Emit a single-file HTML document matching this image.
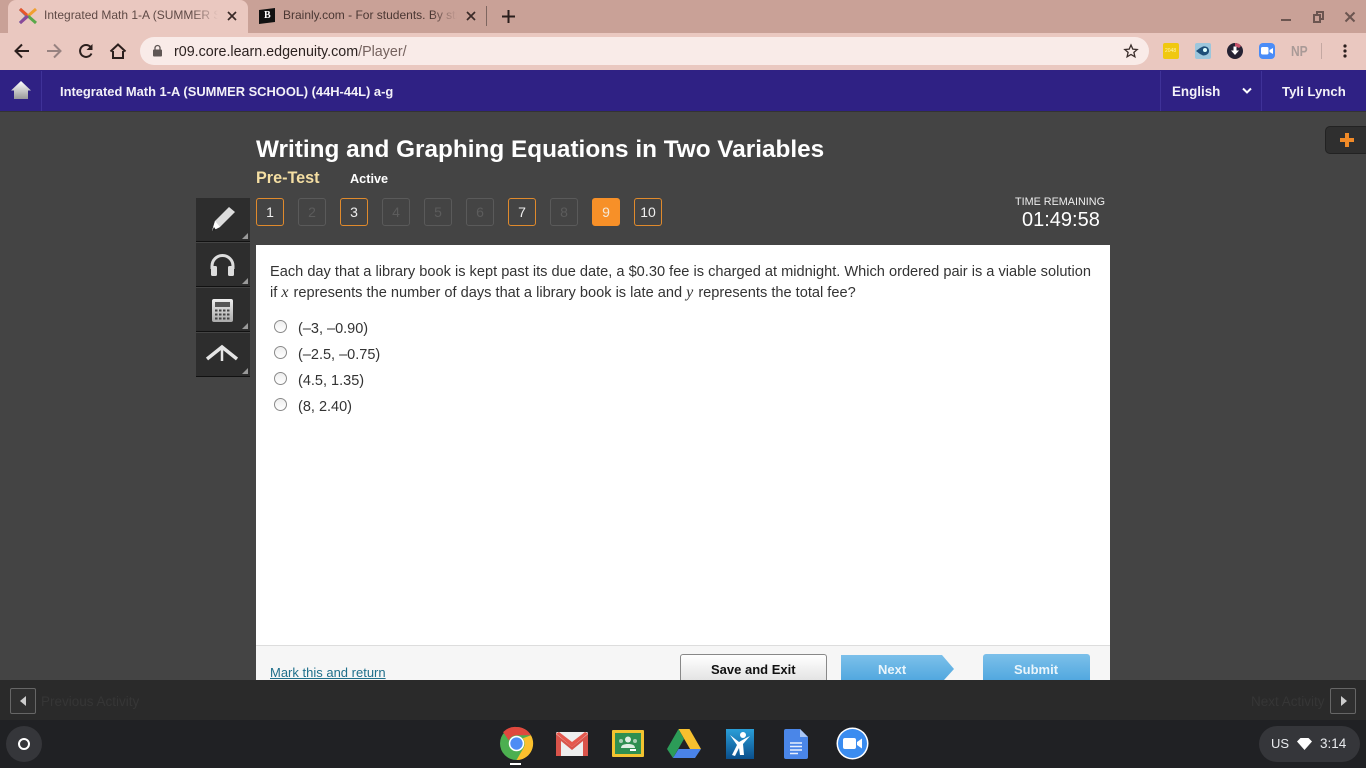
<!DOCTYPE html>
<html><head><meta charset="utf-8"><style>
html,body{margin:0;padding:0;width:1366px;height:768px;overflow:hidden;background:#444;font-family:"Liberation Sans",sans-serif}
.a{position:absolute}
.t{position:absolute;white-space:nowrap}
svg{position:absolute;overflow:visible}
.n{position:absolute;top:198px;width:26px;height:26px;border:1px solid #e08a2c;border-radius:3px;color:#eee;font-size:14px;line-height:27px;text-align:center}
.n.d{border-color:#5a5a5a;color:#5c5c5c}
.n.c{background:#f79028;border-color:#f79028;color:#f5e9d8}
.tool{position:absolute;left:196px;width:54px;height:43px;background:#2d2d2d;border-bottom:1px solid #111}
.tool i{position:absolute;right:2px;bottom:2px;width:0;height:0;border-style:solid;border-width:0 0 6px 6px;border-color:transparent transparent #999 transparent}
.r{position:absolute;left:274px;width:11px;height:11px;border:1px solid #8a8a8a;border-radius:50%;background:linear-gradient(#eee,#fff)}
.o{position:absolute;left:298px;font-size:14.5px;color:#333;white-space:nowrap}
.m{font:italic 16px 'Liberation Serif',serif;margin-right:1px}
</style></head><body>
<!-- tab strip -->
<div class="a" style="left:0;top:0;width:1366px;height:33px;background:#c9a197"></div>
<div class="a" style="left:8px;top:0;width:240px;height:33px;background:#eac8c0;border-radius:8px 8px 0 0"></div>
<svg style="left:18px;top:7px" width="20" height="18" viewBox="0 0 20 18"><path d="M2 2L9 9L2 16" stroke="#3f7fb5" stroke-width="3" fill="none"/><path d="M2 2L10 9" stroke="#e8562a" stroke-width="3"/><path d="M18 2L10 9" stroke="#f0a030" stroke-width="3"/><path d="M10 9L18 16" stroke="#5aa84a" stroke-width="3"/><path d="M2 16L10 9" stroke="#8a4a9a" stroke-width="3"/></svg>
<div class="t" style="left:44px;top:8px;font-size:12px;color:#5f4a46;width:174px;overflow:hidden;-webkit-mask-image:linear-gradient(90deg,#000 85%,transparent)">Integrated Math 1-A (SUMMER SCHOOL)</div>
<svg style="left:227px;top:11px" width="10" height="10"><path d="M1 1L9 9M9 1L1 9" stroke="#3a2a28" stroke-width="1.7"/></svg>
<svg style="left:259px;top:8px" width="16" height="16"><path d="M0 2L16 0V14L0 16Z" fill="#111"/></svg>
<div class="t" style="left:264px;top:10px;font:bold 10px 'Liberation Serif',serif;color:#fff">B</div>
<div class="t" style="left:283px;top:8px;font-size:12px;color:#4a3733;width:174px;overflow:hidden;-webkit-mask-image:linear-gradient(90deg,#000 85%,transparent)">Brainly.com - For students. By students.</div>
<svg style="left:466px;top:11px" width="10" height="10"><path d="M1 1L9 9M9 1L1 9" stroke="#3a2a28" stroke-width="1.7"/></svg>
<div class="a" style="left:486px;top:6px;width:1px;height:20px;background:#7e6660"></div>
<svg style="left:502px;top:10px" width="13" height="13"><path d="M6.500 0V13M0 6.500H13" stroke="#2a1e1c" stroke-width="2"/></svg>
<svg style="left:1280px;top:11px" width="76" height="12"><path d="M1 9H11" stroke="#6b5550" stroke-width="2"/><path d="M34 4H40V11H34Z M37 4V1H43V8H40" stroke="#6b5550" stroke-width="2" fill="none"/><path d="M65.500 1.500L74.500 10.500M74.500 1.500L65.500 10.500" stroke="#6b5550" stroke-width="2"/></svg>
<!-- toolbar -->
<div class="a" style="left:0;top:33px;width:1366px;height:37px;background:#eac8c0"></div>
<svg style="left:14px;top:43px" width="16" height="16" viewBox="0 0 16 16"><path d="M15 8H2M8 1.500L1.500 8L8 14.500" stroke="#2b1f1d" stroke-width="2" fill="none"/></svg>
<svg style="left:46px;top:43px" width="16" height="16" viewBox="0 0 16 16"><path d="M1 8H14M8 1.500L14.500 8L8 14.500" stroke="#978280" stroke-width="2" fill="none"/></svg>
<svg style="left:78px;top:43px" width="16" height="16" viewBox="0 0 16 16"><path d="M13.500 10.500A6 6 0 1 1 12.600 4" stroke="#2b1f1d" stroke-width="2" fill="none"/><path d="M14.500 1V7H8.500Z" fill="#2b1f1d"/></svg>
<svg style="left:110px;top:43px" width="16" height="16" viewBox="0 0 16 16"><path d="M3 8V15H13V8M0.500 8.500L8 1.500L15.500 8.500" stroke="#2b1f1d" stroke-width="2" fill="none"/></svg>
<div class="a" style="left:140px;top:37px;width:1009px;height:28px;background:#f9ebe8;border-radius:14px"></div>
<svg style="left:153px;top:45px" width="10" height="12"><rect x="0" y="4.500" width="9" height="7" rx="1" fill="#5f5654"/><path d="M2 5V3A2.500 2.500 0 0 1 7 3V5" stroke="#5f5654" stroke-width="1.300" fill="none"/></svg>
<div class="t" style="left:174px;top:44px;font-size:14.300px;color:#2c2220">r09.core.learn.edgenuity.com<span style="color:#75625e">/Player/</span></div>
<svg style="left:1124px;top:44px" width="14" height="14" viewBox="0 0 14 14"><path d="M7 1L8.800 5.100L13.200 5.500L9.900 8.400L10.900 12.800L7 10.500L3.100 12.800L4.100 8.400L0.800 5.500L5.200 5.100Z" stroke="#3a2d2a" stroke-width="1.300" fill="none"/></svg>
<div class="a" style="left:1163px;top:43px;width:16px;height:16px;background:#f0c810;border-radius:2px"></div>
<div class="t" style="left:1165px;top:48px;font-size:5px;color:#fff5b0">2048</div>
<div class="a" style="left:1195px;top:43px;width:16px;height:16px;background:#9cc6dc;border-radius:2px"></div>
<svg style="left:1196px;top:45px" width="14" height="12"><path d="M0 6L4 3L7 1.500C11 1 13 3 13 6C13 9 10 10.500 7 10.500L4 9Z" fill="#1d4e78"/><circle cx="9" cy="5" r="2" fill="#dff"/></svg>
<svg style="left:1227px;top:43px" width="16" height="16"><circle cx="8" cy="8" r="8" fill="#252233"/><path d="M8 0A8 8 0 0 1 14 3L12 5L8 3Z" fill="#c9506a"/><path d="M6.500 3.500H9.500V7.500H12L8 12L4 7.500H6.500Z" fill="#fff"/></svg>
<div class="a" style="left:1259px;top:43px;width:16px;height:16px;background:#4a8cf7;border-radius:4px"></div>
<svg style="left:1261px;top:47px" width="12" height="8"><rect width="7.500" height="7.500" rx="1.500" fill="#fff"/><path d="M8.500 3L12 1V7L8.500 5Z" fill="#fff"/></svg>
<div class="t" style="left:1291px;top:43px;font:bold 15px 'Liberation Sans Narrow','Liberation Sans',sans-serif;color:#a99a97;transform:scaleX(.8);transform-origin:left">NP</div>
<div class="a" style="left:1321px;top:43px;width:1px;height:16px;background:#c4a8a2"></div>
<svg style="left:1343px;top:44px" width="4" height="14"><circle cx="2" cy="2" r="1.600" fill="#2b1f1d"/><circle cx="2" cy="7" r="1.600" fill="#2b1f1d"/><circle cx="2" cy="12" r="1.600" fill="#2b1f1d"/></svg>
<!-- purple header -->
<div class="a" style="left:0;top:70px;width:1366px;height:41px;background:#2f2184;border-bottom:1px solid #333"></div>
<div class="a" style="left:41px;top:71px;width:1px;height:40px;background:#3f3298"></div>
<div class="a" style="left:1160px;top:71px;width:1px;height:40px;background:#3f3298"></div>
<div class="a" style="left:1261px;top:71px;width:1px;height:40px;background:#3f3298"></div>
<svg style="left:11px;top:81px" width="20" height="19" viewBox="0 0 20 19"><defs><linearGradient id="g1" x1="0" y1="0" x2="0" y2="1"><stop offset="0" stop-color="#fff"/><stop offset="1" stop-color="#999"/></linearGradient></defs><path d="M10 0L20 9.500H17V18H3V9.500H0Z" fill="url(#g1)"/></svg>
<div class="t" style="left:60px;top:84px;font-size:12.900px;font-weight:bold;color:#f3f1f8">Integrated Math 1-A (SUMMER SCHOOL) (44H-44L) a-g</div>
<div class="t" style="left:1172px;top:84px;font-size:13.400px;font-weight:bold;color:#f3f1f8">English</div>
<svg style="left:1242px;top:87px" width="10" height="8"><path d="M1 1.500L5 5.500L9 1.500" stroke="#fff" stroke-width="2" fill="none"/></svg>
<div class="t" style="left:1282px;top:84px;font-size:13.200px;font-weight:bold;color:#f3f1f8">Tyli Lynch</div>
<!-- plus -->
<div class="a" style="left:1325px;top:126px;width:45px;height:28px;background:#2f2f2f;border:1px solid #222;border-radius:5px;box-sizing:border-box"></div>
<svg style="left:1340px;top:133px" width="14" height="14"><path d="M7 0V14M0 7H14" stroke="#f08a28" stroke-width="4"/></svg>
<!-- headings -->
<div class="t" style="left:256px;top:136px;font-size:24.330px;font-weight:bold;color:#fff">Writing and Graphing Equations in Two Variables</div>
<div class="t" style="left:256px;top:169px;font-size:16.200px;font-weight:bold;color:#f5dfa3">Pre-Test</div>
<div class="t" style="left:350px;top:172px;font-size:12.700px;font-weight:bold;color:#fff">Active</div>
<div class="n" style="left:256px">1</div>
<div class="n d" style="left:298px">2</div>
<div class="n" style="left:340px">3</div>
<div class="n d" style="left:382px">4</div>
<div class="n d" style="left:424px">5</div>
<div class="n d" style="left:466px">6</div>
<div class="n" style="left:508px">7</div>
<div class="n d" style="left:550px">8</div>
<div class="n c" style="left:592px">9</div>
<div class="n" style="left:634px">10</div>
<div class="t" style="left:1015px;top:196px;font-size:10.800px;color:#eee">TIME REMAINING</div>
<div class="t" style="left:1022px;top:209px;font-size:20px;color:#fff">01:49:58</div>
<!-- tools -->
<div class="tool" style="top:198px"><i></i></div>
<div class="tool" style="top:243px"><i></i></div>
<div class="tool" style="top:288px"><i></i></div>
<div class="tool" style="top:333px"><i></i></div>
<svg style="left:210px;top:206px" width="26" height="26" viewBox="0 0 26 26"><path d="M19 1L25 6L10 21L2 25L5 15Z" fill="#ddd"/><path d="M5 15L10 21L2 25Z" fill="#fff"/><path d="M2 25L4 21L6 24Z" fill="#222"/></svg>
<svg style="left:209px;top:254px" width="27" height="24" viewBox="0 0 27 24"><path d="M3 15V12A10.500 10.500 0 0 1 24 12V15" stroke="#ddd" stroke-width="3" fill="none"/><rect x="2" y="12" width="6" height="10" rx="1.500" fill="#ddd"/><rect x="19" y="12" width="6" height="10" rx="1.500" fill="#ddd"/></svg>
<div class="a" style="left:212px;top:299px;width:21px;height:23px;background:linear-gradient(#eee,#aaa);border-radius:2px"></div>
<div class="a" style="left:215px;top:302px;width:15px;height:5px;background:#555"></div>
<svg style="left:215px;top:309px" width="15" height="11"><path d="M0 1.500H15M0 5.500H15M0 9.500H15" stroke="#444" stroke-width="2" stroke-dasharray="2.500 1.500"/></svg>
<svg style="left:205px;top:344px" width="34" height="18" viewBox="0 0 34 18"><path d="M2 15L17 3L32 15" stroke="#e5e5e5" stroke-width="3.500" fill="none"/><path d="M17 3V17" stroke="#e5e5e5" stroke-width="2.500"/></svg>
<!-- panel -->
<div class="a" style="left:256px;top:245px;width:854px;height:400px;background:#fff"></div>
<div class="t" style="left:270px;top:264px;font-size:14.600px;color:#333;">Each day that a library book is kept past its due date, a $0.30 fee is charged at midnight. Which ordered pair is a viable solution</div>
<div class="t" style="left:270px;top:284px;font-size:14.600px;color:#333;">if <span class="m">x</span> represents the number of days that a library book is late and <span class="m">y</span> represents the total fee?</div>
<div class="r" style="top:320px"></div><div class="o" style="top:321px">(–3, –0.90)</div>
<div class="r" style="top:346px"></div><div class="o" style="top:347px">(–2.5, –0.75)</div>
<div class="r" style="top:372px"></div><div class="o" style="top:373px">(4.5, 1.35)</div>
<div class="r" style="top:398px"></div><div class="o" style="top:399px">(8, 2.40)</div>
<!-- panel footer -->
<div class="a" style="left:256px;top:645px;width:854px;height:35px;background:#f6f6f6;border-top:1px solid #ddd;box-sizing:border-box"></div>
<div class="t" style="left:270px;top:665px;font-size:13px;color:#1f6f8b;text-decoration:underline">Mark this and return</div>
<div class="a" style="left:680px;top:654px;width:147px;height:26px;box-sizing:border-box;background:linear-gradient(#fff,#e4e4e4);border:1px solid #888;border-bottom:0;border-radius:3px 3px 0 0"></div>
<div class="t" style="left:711px;top:662px;font-size:13px;font-weight:bold;color:#111">Save and Exit</div>
<svg style="left:841px;top:655px" width="114" height="25"><defs><linearGradient id="g2" x1="0" y1="0" x2="0" y2="1"><stop offset="0" stop-color="#7cc0ea"/><stop offset="1" stop-color="#52a8df"/></linearGradient></defs><path d="M1 0H101L113 14L103 25H0V0Z" fill="url(#g2)"/></svg>
<div class="t" style="left:878px;top:662px;font-size:13px;font-weight:bold;color:#eaf5fb">Next</div>
<div class="a" style="left:983px;top:654px;width:107px;height:26px;background:linear-gradient(#7cc0ea,#52a8df);border-radius:3px 3px 0 0"></div>
<div class="t" style="left:1014px;top:662px;font-size:13px;font-weight:bold;color:#eaf5fb">Submit</div>
<!-- activity bar -->
<div class="a" style="left:0;top:680px;width:1366px;height:40px;background:#2a2a2a"></div>
<div class="a" style="left:10px;top:688px;width:26px;height:26px;box-sizing:border-box;border:1px solid #666;border-radius:2px;background:#2f2f2f"></div>
<svg style="left:19px;top:696px" width="8" height="10"><path d="M7 0V10L1 5Z" fill="#ccc"/></svg>
<div class="t" style="left:41px;top:694px;font-size:13.500px;color:#363636">Previous Activity</div>
<div class="t" style="left:1251px;top:694px;font-size:13.500px;color:#363636">Next Activity</div>
<div class="a" style="left:1330px;top:688px;width:26px;height:26px;box-sizing:border-box;border:1px solid #666;border-radius:2px;background:#2f2f2f"></div>
<svg style="left:1340px;top:696px" width="8" height="10"><path d="M1 0V10L7 5Z" fill="#ccc"/></svg>
<!-- shelf -->
<div class="a" style="left:0;top:720px;width:1366px;height:48px;background:#202124"></div>
<div class="a" style="left:6px;top:726px;width:36px;height:36px;border-radius:50%;background:#35363a"></div>
<div class="a" style="left:18px;top:738px;width:8px;height:8px;border:2px solid #fff;border-radius:50%"></div>
<!-- chrome -->
<svg style="left:500px;top:727px" width="33" height="33" viewBox="0 0 32 32"><circle cx="16" cy="16" r="16" fill="#4caf50"/><path d="M16 0A16 16 0 0 1 30 8H16A8 8 0 0 0 8.500 13L3 5A16 16 0 0 1 16 0Z" fill="#e0483e"/><path d="M30 8A16 16 0 0 1 16 32L23 20A8 8 0 0 0 22 11Z" fill="#fbc02d"/><circle cx="16" cy="16" r="7.500" fill="#fff"/><circle cx="16" cy="16" r="6" fill="#4d8cf5"/></svg>
<div class="a" style="left:510px;top:763px;width:11px;height:2px;background:#fff"></div>
<!-- gmail -->
<svg style="left:556px;top:732px" width="32" height="24" viewBox="0 0 32 24"><rect width="32" height="24" rx="1.500" fill="#eee"/><path d="M0 2L16 15L32 2V24H27V9L16 18L5 9V24H0Z" fill="#d9534a"/><path d="M0 1.500L3 0L16 10L29 0L32 1.500L16 15Z" fill="#e5584d"/></svg>
<!-- classroom -->
<div class="a" style="left:612px;top:730px;width:32px;height:27px;box-sizing:border-box;background:#2f8f50;border:3px solid #f2c330;border-radius:1px"></div>
<svg style="left:618px;top:736px" width="20" height="17"><circle cx="10" cy="3.500" r="3" fill="#dfeee2"/><path d="M3 12C3 9 6 8 10 8C14 8 17 9 17 12Z" fill="#dfeee2"/><circle cx="3" cy="5" r="2" fill="#a9d0b3"/><circle cx="17" cy="5" r="2" fill="#a9d0b3"/><rect x="12" y="13" width="6" height="2" fill="#fff"/></svg>
<!-- drive -->
<svg style="left:667px;top:729px" width="34" height="29" viewBox="0 0 34 29"><path d="M11.500 0H22.500L34 20H23Z" fill="#f6c02f"/><path d="M11.500 0L17 10L6 29L0 20Z" fill="#2c9c58"/><path d="M11.500 20H34L28 29H6Z" fill="#4a83e8"/></svg>
<!-- edgenuity -->
<div class="a" style="left:726px;top:729px;width:28px;height:30px;background:linear-gradient(#2a9ed8,#0a4f8c)"></div>
<svg style="left:726px;top:729px" width="28" height="30"><circle cx="17" cy="6" r="3" fill="#fff"/><path d="M4 6L13 13L20 9L24 7L17 15L18 26L14 26L13 19L9 27L6 26L11 16Z" fill="#fff"/></svg>
<!-- docs -->
<svg style="left:784px;top:729px" width="24" height="30" viewBox="0 0 24 30"><path d="M2 0H16L24 8V28A2 2 0 0 1 22 30H2A2 2 0 0 1 0 28V2A2 2 0 0 1 2 0Z" fill="#4a86e8"/><path d="M16 0L24 8H16Z" fill="#a9c6f5"/><path d="M6 14H18M6 17.500H18M6 21H18M6 24.500H14" stroke="#e8f0fd" stroke-width="1.500"/></svg>
<!-- zoom -->
<svg style="left:836px;top:727px" width="33" height="33" viewBox="0 0 33 33"><circle cx="16.500" cy="16.500" r="16" fill="#fff"/><circle cx="16.500" cy="16.500" r="14.500" fill="#3a8cf0"/><rect x="7" y="11" width="13" height="11" rx="2" fill="#fff"/><path d="M21 15L26 11.500V21.500L21 18Z" fill="#fff"/></svg>
<!-- tray -->
<div class="a" style="left:1259px;top:726px;width:101px;height:36px;border-radius:18px;background:#35363a"></div>
<div class="t" style="left:1271px;top:736px;font-size:13px;color:#e8eaed">US</div>
<svg style="left:1297px;top:738px" width="15" height="12"><path d="M0 3.500L3.500 0H11.500L15 3.500L7.500 12Z" fill="#fff"/></svg>
<div class="t" style="left:1320px;top:736px;font-size:13.500px;color:#e8eaed">3:14</div>
</body></html>
